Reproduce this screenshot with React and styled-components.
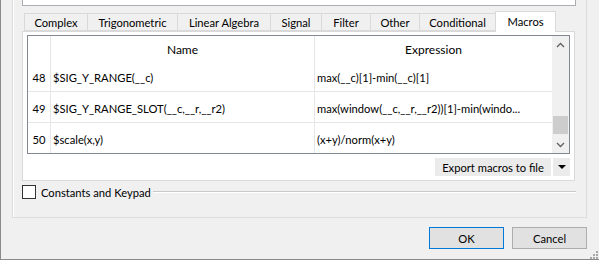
import styled, { createGlobalStyle } from 'styled-components'

const GlobalStyle = createGlobalStyle`
html, body {
  margin: 0;
  padding: 0;
  background: #f0f0f0;
}
body {
  font-family: Lato, "Liberation Sans", sans-serif;
  font-size: 11.2px;
  color: #000;
}
* { box-sizing: border-box; }
`;

const tabs = [
  { label: 'Complex', width: 64 },
  { label: 'Trigonometric', width: 91 },
  { label: 'Linear Algebra', width: 94 },
  { label: 'Signal', width: 52 },
  { label: 'Filter', width: 50 },
  { label: 'Other', width: 50 },
  { label: 'Conditional', width: 77 },
  { label: 'Macros', width: 61, active: true },
];

const macros = [
  { n: 48, name: '$SIG_Y_RANGE(__c)', expr: 'max(__c)[1]-min(__c)[1]' },
  { n: 49, name: '$SIG_Y_RANGE_SLOT(__c,__r,__r2)', expr: 'max(window(__c,__r,__r2))[1]-min(windo...' },
  { n: 50, name: '$scale(x,y)', expr: '(x+y)/norm(x+y)' },
];

const App = () => {
  return (
    <Window>
      <GlobalStyle />
      <GroupBox>
        <TopBox />
        <TabBar>
          {tabs.map((t) => (
            <Tab key={t.label} $w={t.width} $active={t.active}>{t.label}</Tab>
          ))}
        </TabBar>
        <Pane>
          <Table>
            <Grid>
              <HeaderRow>
                <RowHead />
                <NameCell $head>Name</NameCell>
                <ExprCell $head>Expression</ExprCell>
              </HeaderRow>
              {macros.map((m) => (
                <Row key={m.n}>
                  <RowHead>{m.n}</RowHead>
                  <NameCell>{m.name}</NameCell>
                  <ExprCell>{m.expr}</ExprCell>
                </Row>
              ))}
            </Grid>
            <ScrollBar>
              <ScrollButton>
                <svg width="9" height="6" viewBox="0 0 9 6">
                  <polyline points="1,5 4.5,1.5 8,5" fill="none" stroke="#606060" strokeWidth="1.3" />
                </svg>
              </ScrollButton>
              <Track>
                <Thumb />
              </Track>
              <ScrollButton>
                <svg width="9" height="6" viewBox="0 0 9 6">
                  <polyline points="1,1 4.5,4.5 8,1" fill="none" stroke="#606060" strokeWidth="1.3" />
                </svg>
              </ScrollButton>
            </ScrollBar>
          </Table>
          <ExportRow>
            <FlatButton>Export macros to file</FlatButton>
            <MenuButton>
              <svg width="8" height="4" viewBox="0 0 8 4">
                <polygon points="0,0 8,0 4,4" fill="#000" />
              </svg>
            </MenuButton>
          </ExportRow>
        </Pane>
        <CheckRow>
          <CheckBox />
          <CheckLabel>Constants and Keypad</CheckLabel>
          <TitleLine />
        </CheckRow>
      </GroupBox>
      <ButtonRow>
        <DialogButton $focused>OK</DialogButton>
        <DialogButton>Cancel</DialogButton>
      </ButtonRow>
      <Grip>
        <svg width="10" height="10" viewBox="0 0 10 10">
          {[[8, 0], [8, 3], [5, 3], [8, 6], [5, 6], [2, 6]].map(([x, y]) => (
            <rect key={`${x}-${y}`} x={x} y={y + 2} width="2" height="2" fill="#a8a8a8" />
          ))}
        </svg>
      </Grip>
    </Window>
  )
}

const Window = styled.div`
position: relative;
width: 599px;
height: 260px;
border-left: 1px solid #8a8a8a;
border-bottom: 1px solid #8a8a8a;
padding-left: 11px;
display: flex;
flex-direction: column;
overflow: hidden;
`;

const GroupBox = styled.div`
width: 575px;
height: 218px;
border: 1px solid #dcdcdc;
border-top: none;
box-shadow: inset 1px 0 0 #fff;
padding: 0 11px 0 9px;
display: flex;
flex-direction: column;
`;

const TopBox = styled.div`
height: 6px;
background: #fff;
border: 1px solid #abadb3;
border-top: none;
margin-right: -1px;
`;

const TabBar = styled.div`
display: flex;
align-items: flex-end;
height: 19px;
margin-top: 6px;
padding-left: 2px;
position: relative;
z-index: 1;
`;

const Tab = styled.div`
width: ${(p) => p.$w}px;
height: ${(p) => (p.$active ? 21 : 18)}px;
margin-bottom: ${(p) => (p.$active ? -1 : 0)}px;
margin-right: -1px;
display: flex;
align-items: center;
justify-content: center;
padding-bottom: ${(p) => (p.$active ? 2 : 0)}px;
background: ${(p) => (p.$active ? '#fff' : '#f0f0f0')};
border: 1px solid #d9d9d9;
border-bottom: ${(p) => (p.$active ? 'none' : '1px solid #d9d9d9')};
color: #000;
white-space: nowrap;
`;

const Pane = styled.div`
height: 150px;
background: #fff;
border: 1px solid #d9d9d9;
padding: 3px 4px 0 4px;
display: flex;
flex-direction: column;
`;

const Table = styled.div`
height: 119px;
border: 1px solid #828790;
display: flex;
overflow: hidden;
`;

const Grid = styled.div`
flex: 1;
display: flex;
flex-direction: column;
overflow: hidden;
`;

const HeaderRow = styled.div`
display: flex;
height: 25px;
flex-shrink: 0;
font-size: 12px;
`;

const Row = styled.div`
display: flex;
height: 31px;
flex-shrink: 0;
border-bottom: 1px solid #e6e6e6;
`;

const RowHead = styled.div`
width: 23px;
flex-shrink: 0;
border-right: 1px solid #e6e6e6;
display: flex;
align-items: center;
justify-content: center;
padding-top: 3px;
`;

const Cell = styled.div`
display: flex;
align-items: center;
justify-content: ${(p) => (p.$head ? 'center' : 'flex-start')};
padding: ${(p) => (p.$head ? '1px 0 0 0' : '3px 0 0 2px')};
white-space: nowrap;
overflow: hidden;
`;

const NameCell = styled(Cell)`
width: 264px;
flex-shrink: 0;
border-right: 1px solid #e6e6e6;
`;

const ExprCell = styled(Cell)`
flex: 1;
`;

const ScrollBar = styled.div`
width: 17px;
flex-shrink: 0;
background: #f0f0f0;
display: flex;
flex-direction: column;
`;

const ScrollButton = styled.div`
height: 17px;
display: flex;
align-items: center;
justify-content: center;
`;

const Track = styled.div`
flex: 1;
padding: 63px 1px 0 1px;
`;

const Thumb = styled.div`
height: 18px;
background: #cdcdcd;
`;

const ExportRow = styled.div`
display: flex;
justify-content: flex-end;
gap: 2px;
margin-top: 4px;
`;

const FlatButton = styled.div`
width: 116px;
height: 18px;
background: #ebebeb;
display: flex;
align-items: center;
justify-content: center;
white-space: nowrap;
`;

const MenuButton = styled.div`
width: 17px;
height: 18px;
background: #ebebeb;
display: flex;
align-items: center;
justify-content: center;
`;

const CheckRow = styled.div`
display: flex;
align-items: center;
height: 14px;
margin-top: 4px;
margin-right: -1px;
`;

const CheckBox = styled.div`
width: 14px;
height: 14px;
border: 1px solid #333;
background: #fff;
flex-shrink: 0;
`;

const CheckLabel = styled.span`
margin-left: 5px;
white-space: nowrap;
`;

const TitleLine = styled.div`
flex: 1;
margin-left: 2px;
height: 2px;
border-top: 1px solid #c8c8c8;
border-bottom: 1px solid #fff;
`;

const ButtonRow = styled.div`
display: flex;
justify-content: flex-end;
gap: 8px;
margin-top: 9px;
padding-right: 12px;
`;

const DialogButton = styled.div`
width: 75px;
height: 22px;
background: #e1e1e1;
border: 1px solid ${(p) => (p.$focused ? '#0078d7' : '#adadad')};
display: flex;
align-items: center;
justify-content: center;
`;

const Grip = styled.div`
position: absolute;
right: 1px;
bottom: 0;
line-height: 0;
`;

export default App
